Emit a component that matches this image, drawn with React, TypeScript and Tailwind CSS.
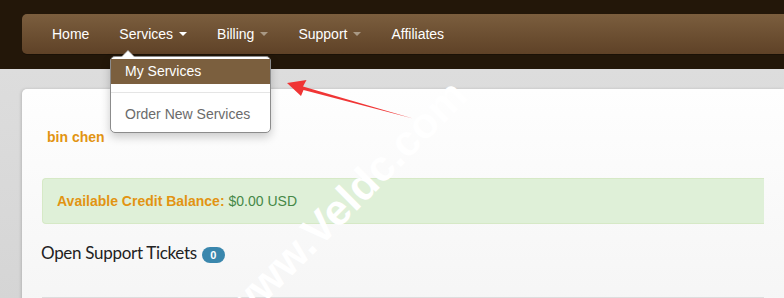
const navItems = [
  { label: 'Home', caret: null },
  { label: 'Services', caret: 'active' },
  { label: 'Billing', caret: 'muted' },
  { label: 'Support', caret: 'muted' },
  { label: 'Affiliates', caret: null },
];

function Caret({ tone }: { tone: string }) {
  return (
    <span
      className={
        'ml-[6px] inline-block h-0 w-0 border-x-[4px] border-t-[4px] border-x-transparent ' +
        (tone === 'active' ? 'border-t-white' : 'border-t-[#a99985]')
      }
    />
  );
}

export default function App() {
  return (
    <div className="relative h-[298px] w-[784px] overflow-hidden bg-[#dcdcdc] font-['Liberation_Sans',Arial,sans-serif]">
      {/* top bar */}
      <header className="h-[69px] bg-[#231709] pl-[22px] pt-[14px]">
        <nav className="flex h-[40px] items-center rounded-l-[5px] bg-gradient-to-b from-[#7b5e3e] to-[#5f4227] pl-[15px] shadow-[0_1px_0_rgba(0,0,0,0.25)]">
          {navItems.map((item) => (
            <a key={item.label} className="flex items-center px-[15px] text-[14px] leading-[20px] text-white">
              {item.label}
              {item.caret && <Caret tone={item.caret} />}
            </a>
          ))}
        </nav>
      </header>

      {/* content */}
      <div className="bg-gradient-to-b from-[#dddddd] to-[#d2d2d2] pl-[22px] pt-[20px]">
        <div className="h-[300px] rounded-tl-[5px] bg-gradient-to-b from-[#fefefe] to-[#f2f2f2] px-[20px] pt-[38px] shadow-[-1px_0_3px_rgba(0,0,0,0.15)]">
          <div className="pl-[5px] text-[14px] font-bold leading-[20px] text-[#e29412]">bin chen</div>
          <div className="mt-[31px] flex h-[46px] items-center rounded-l-[4px] border border-r-0 border-[#d6e9c6] bg-[#dff0d8] pl-[14px] text-[14px]">
            <span className="font-bold text-[#e29412]">Available Credit Balance:</span>
            <span className="ml-[4px] text-[#468847]">$0.00 USD</span>
          </div>
          <div className="mt-[17px] flex items-center font-['Lato',sans-serif] text-[17px] leading-[24px] tracking-[-0.3px] text-[#222]">
            <span className="-ml-px">Open Support Tickets</span>
            <span className="ml-[5px] mt-[3px] flex h-[16px] w-[23px] items-center justify-center rounded-full bg-[#3a87ad] font-['Liberation_Sans',Arial,sans-serif] text-[11px] font-bold tracking-normal text-white">
              0
            </span>
          </div>
          <div className="mt-[32px] border-t border-[#dddddd]" />
        </div>
      </div>

      {/* services dropdown */}
      <div className="absolute left-[110px] top-[56px] w-[161px] rounded-[5px] border border-[#8c8c8c] bg-white py-[2px] shadow-[0_4px_10px_rgba(0,0,0,0.2)]">
        <span className="absolute -top-[7px] left-[10px] h-0 w-0 border-x-[7px] border-b-[7px] border-x-transparent border-b-[#b5b5b5]" />
        <span className="absolute -top-[6px] left-[11px] h-0 w-0 border-x-[6px] border-b-[6px] border-x-transparent border-b-white" />
        <div className="h-[25px] bg-[#7b5f3e] px-[14px] text-[14px] leading-[25px] text-white">My Services</div>
        <div className="mt-[8px] border-t border-[#e5e5e5]" />
        <div className="mb-[3px] mt-[9px] h-[25px] px-[14px] text-[14px] leading-[25px] text-[#6b6b6b]">Order New Services</div>
      </div>

      {/* annotation arrow */}
      <svg className="absolute left-0 top-0" width="784" height="298" viewBox="0 0 784 298">
        <polygon
          points="287,83 306.5,80 303,86.5 413,118.5 303.5,90 301,96"
          fill="#f03535"
        />
      </svg>

      {/* watermark */}
      <span className="absolute left-[345px] top-[202px] -translate-x-1/2 -translate-y-1/2 rotate-[-45deg] whitespace-nowrap text-[43px] font-semibold leading-none text-white">
        www.Veldc.com
      </span>
    </div>
  );
}
